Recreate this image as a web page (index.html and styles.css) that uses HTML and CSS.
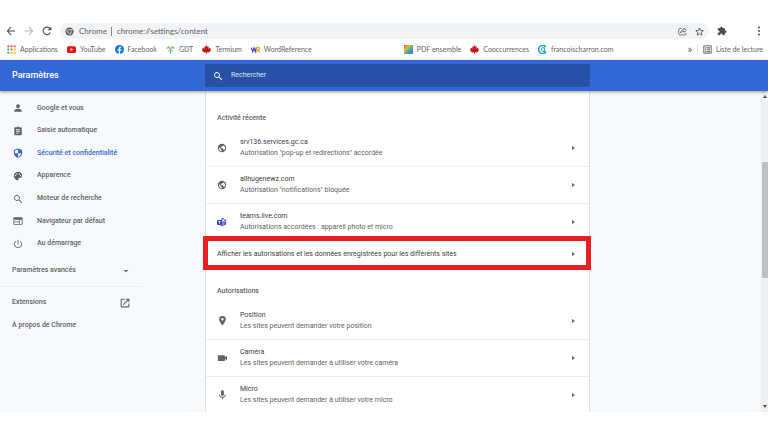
FILE: index.html
```html
<!DOCTYPE html>
<html lang="fr">
<head>
  <meta charset="utf-8">
  <title>Paramètres</title>
  <link rel="stylesheet" href="styles.css">
</head>
<body>

<!-- Browser toolbar -->
<div class="toolbar">
  <button class="tool-btn" aria-label="Retour"><svg class="icon" viewBox="0 0 24 24"><path d="M22 10.800H6l7-7L11.300 2 1.500 12l9.800 10 1.700-1.800-7-7h16z"/></svg></button>
  <button class="tool-btn disabled" aria-label="Avancer"><svg class="icon" viewBox="0 0 24 24"><path d="M2 10.800h16l-7-7L12.700 2l9.800 10-9.800 10-1.700-1.800 7-7H2z"/></svg></button>
  <button class="tool-btn" aria-label="Actualiser"><svg class="icon" viewBox="0 0 24 24"><path d="M20 15.500A9 9 0 1 1 18.500 5.700L21 8.200" fill="none" stroke="currentColor" stroke-width="2.600"/><path d="M22.500 1v9h-9z"/></svg></button>
  <div class="omnibox">
    <svg class="icon" viewBox="0 0 24 24"><circle cx="12" cy="12" r="11"/><path d="M12 7h10M7.700 14.500l-5-8.500M16.300 14.500l-5 8.500" stroke="#f1f3f4" stroke-width="1.600"/><circle cx="12" cy="12" r="5" stroke="#f1f3f4" stroke-width="1.600"/></svg>
    <label class="omnibox-label" for="url">Chrome</label>
    <input class="omnibox-input" id="url" type="text" value="chrome://settings/content">
    <button class="tool-btn" aria-label="Partager"><svg class="icon" viewBox="0 0 24 24"><path d="M10 4H5a3 3 0 0 0-3 3v11a3 3 0 0 0 3 3h13a3 3 0 0 0 3-3v-2M7 16c0-6 4-9 9-9V2.500L22.500 9 16 14.500V11c-4 0-7 1.500-9 5z" fill="none" stroke="currentColor" stroke-width="1.900"/></svg></button>
    <button class="tool-btn" aria-label="Ajouter aux favoris"><svg class="icon" viewBox="0 0 24 24"><path d="M12 2.500l2.900 6.600 7.100.7-5.400 4.700 1.600 7L12 17.800l-6.200 3.700 1.600-7L2 9.800l7.100-.7z" fill="none" stroke="currentColor" stroke-width="2.200"/></svg></button>
  </div>
  <button class="tool-btn" aria-label="Extensions"><svg class="icon" viewBox="0 0 24 24"><path d="M20.500 11H19V7c0-1.100-.9-2-2-2h-4V3.500a2.500 2.500 0 0 0-5 0V5H4c-1.100 0-2 .9-2 2v3.800h1.500a2.700 2.700 0 0 1 0 5.400H2V20c0 1.100.9 2 2 2h3.800v-1.500a2.700 2.700 0 0 1 5.400 0V22H17c1.100 0 2-.9 2-2v-4h1.500a2.500 2.500 0 0 0 0-5z"/></svg></button>
  <button class="tool-btn menu-btn" aria-label="Menu"><svg class="icon" viewBox="0 0 24 24"><circle cx="12" cy="3.500" r="2.400"/><circle cx="12" cy="12" r="2.400"/><circle cx="12" cy="20.500" r="2.400"/></svg></button>
</div>

<!-- Bookmarks -->
<nav class="bookmarks">
  <a class="bookmark" href="#"><svg class="icon" viewBox="0 0 24 24"><path fill="#ea4335" d="M1 1h5v5H1zM9.500 1h5v5h-5zM18 1h5v5h-5z"/><path fill="#34a853" d="M1 9.500h5v5H1z"/><path fill="#4285f4" d="M9.500 9.500h5v5h-5z"/><path fill="#fbbc05" d="M18 9.500h5v5h-5zM9.500 18h5v5h-5zM18 18h5v5h-5z"/><path fill="#34a853" d="M1 18h5v5H1z"/></svg>Applications</a>
  <a class="bookmark" href="#"><svg class="icon" viewBox="0 0 24 24"><rect y="3" width="24" height="18" rx="4" fill="#e11"/><path d="M9.500 8v8l7-4z" fill="#fff"/></svg>YouTube</a>
  <a class="bookmark" href="#"><svg class="icon" viewBox="0 0 24 24"><circle cx="12" cy="12" r="12" fill="#1877e8"/><path d="M10 24v-9H7v-3.500h3V9c0-3 1.800-4.600 4.500-4.600l2.500.2v3h-1.500c-1.500 0-1.900.9-1.900 1.900v2H17l-.6 3.500h-2.800v9z" fill="#fff"/></svg>Facebook</a>
  <a class="bookmark" href="#"><svg class="icon gdt" viewBox="0 0 24 24"><path d="M12 23V9" stroke="#6aa84f"/><path d="M12 11C9 6 5 6 1 9M12 11c3-5 7-5 11-2" stroke="#5cb58a"/><path d="M12 11L6 2M12 11l6-9" stroke="#b6c94b"/><path d="M12 12l-7 5M12 12l7 5" stroke="#8ccbb4"/></svg>GDT</a>
  <a class="bookmark" href="#"><svg class="icon" viewBox="0 0 24 24"><path fill="#c4161c" d="M12 0l2.600 4.500L18 3l-1 7 3.500-3 .8 2.200H24l-1.500 4L24 15l-6 5-5-.8V24h-2v-4.800L6 20l-6-5 1.500-1.800-1.500-4h2.700L3.500 7 7 10 6 3l3.400 1.500z"/></svg>Termium</a>
  <a class="bookmark" href="#"><svg class="icon wr" viewBox="0 0 24 24"><path d="M1 7l3.500 11L8 8l3.500 10L14 7" stroke="#4540c8"/><path d="M15.500 20V6h4a3.500 3.500 0 0 1 0 7h-4M19 13l4 7" stroke="#e49b3b"/></svg>WordReference</a>
  <span class="bookmark-gap"></span>
  <a class="bookmark" href="#"><span class="rainbow"></span>PDF ensemble</a>
  <a class="bookmark" href="#"><svg class="icon" viewBox="0 0 24 24"><path fill="#c4161c" d="M12 0l2.600 4.500L18 3l-1 7 3.500-3 .8 2.200H24l-1.500 4L24 15l-6 5-5-.8V24h-2v-4.800L6 20l-6-5 1.500-1.800-1.500-4h2.700L3.500 7 7 10 6 3l3.400 1.500z"/></svg>Cooccurrences</a>
  <a class="bookmark" href="#"><svg class="icon charron" viewBox="0 0 24 24"><path d="M21 5a11 11 0 1 0 0 14" stroke="#1aa3cf" stroke-width="4"/><path d="M17 9a5 5 0 1 0 0 6M17 6v12h5" stroke="#1a8fc0" stroke-width="2.500"/></svg>francoischarron.com</a>
  <div class="reading">
    <button class="more-btn" aria-label="Autres favoris">»</button>
    <a class="bookmark reading-link" href="#"><svg class="icon" viewBox="0 0 24 24"><path d="M2 2h20v20H2z" fill="none" stroke="currentColor" stroke-width="2.400"/><path d="M5 6h4v3H5zM11 6h8v3h-8zM5 11h4v3H5zM11 11h8v3h-8zM5 16h4v3H5zM11 16h8v3h-8z"/></svg>Liste de lecture</a>
  </div>
</nav>

<!-- Settings header -->
<header class="header">
  <h1 class="header-title">Paramètres</h1>
  <div class="search">
    <label class="search-label" for="search" aria-label="Rechercher"><svg class="icon" viewBox="0 0 24 24"><path d="M16 14.500h-.8l-.3-.3a7 7 0 1 0-.7.700l.3.300v.8l6 6 1.700-1.700zm-6.500 0a5 5 0 1 1 0-10 5 5 0 0 1 0 10z"/></svg></label>
    <input class="search-input" id="search" type="text" placeholder="Rechercher">
  </div>
</header>

<div class="content">
  <nav class="sidebar">
    <div class="menu">
      <a class="menu-item" href="#"><svg class="icon" viewBox="0 0 24 24"><path d="M12 12a4.500 4.500 0 1 0 0-9 4.500 4.500 0 0 0 0 9zm0 2c-3 0-9 1.500-9 4.500V21h18v-2.500c0-3-6-4.500-9-4.500z"/></svg>Google et vous</a>
      <a class="menu-item" href="#"><svg class="icon" viewBox="0 0 24 24"><path d="M19 3h-4.200a3 3 0 0 0-5.600 0H5a2 2 0 0 0-2 2v15c0 1.100.9 2 2 2h14a2 2 0 0 0 2-2V5a2 2 0 0 0-2-2zm-5 15H7v-2h7zm3-4H7v-2h10zm0-4H7V8h10z"/></svg>Saisie automatique</a>
      <a class="menu-item active" href="#"><svg class="icon" viewBox="0 0 24 24"><path d="M12 1L2 5v6.500C2 17 6 22 12 23.500 18 22 22 17 22 11.500V5zm0 11.500h7.500c-.5 4-3.500 7.300-7.500 8.500v-8.500H4.500v-6L12 3.500z"/></svg>Sécurité et confidentialité</a>
      <a class="menu-item" href="#"><svg class="icon" viewBox="0 0 24 24"><path d="M12 2a10 10 0 0 0 0 20 1.700 1.700 0 0 0 1.200-2.800c-.9-1.200-.2-2.700 1.300-2.700H16.500A5.500 5.500 0 0 0 22 11c0-5-4.500-9-10-9zM6 12.500a1.600 1.600 0 1 1 0-3.200 1.600 1.600 0 0 1 0 3.200zm3-4a1.600 1.600 0 1 1 0-3.200 1.600 1.600 0 0 1 0 3.200zm6 0a1.600 1.600 0 1 1 0-3.200 1.600 1.600 0 0 1 0 3.200zm3 4a1.600 1.600 0 1 1 0-3.200 1.600 1.600 0 0 1 0 3.200z"/></svg>Apparence</a>
      <a class="menu-item" href="#"><svg class="icon" viewBox="0 0 24 24"><path d="M16 14.500h-.8l-.3-.3a7 7 0 1 0-.7.700l.3.300v.8l6 6 1.700-1.700zm-6.500 0a5 5 0 1 1 0-10 5 5 0 0 1 0 10z"/></svg>Moteur de recherche</a>
      <a class="menu-item" href="#"><svg class="icon" viewBox="0 0 24 24"><path d="M21 3H3a2 2 0 0 0-2 2v14c0 1.100.9 2 2 2h18a2 2 0 0 0 2-2V5a2 2 0 0 0-2-2zM14 19H3v-4h11zm0-6H3V9h11zm7 6h-5V9h5z"/></svg>Navigateur par défaut</a>
      <a class="menu-item" href="#"><svg class="icon" viewBox="0 0 24 24"><path d="M11 2h2v11h-2zM17.800 4.800l-1.400 1.400A7.500 7.500 0 1 1 7.600 6.200L6.200 4.800a9.500 9.500 0 1 0 11.600 0z"/></svg>Au démarrage</a>
    </div>
    <button class="side-row advanced">Paramètres avancés<svg class="icon" viewBox="0 0 24 24"><path d="M5 9l7 7 7-7z"/></svg></button>
    <div class="side-links">
      <a class="side-row" href="#">Extensions<svg class="icon" viewBox="0 0 24 24"><path d="M20 20H4V4h7V1.500H3.500a2 2 0 0 0-2 2v17c0 1.100.9 2 2 2h17a2 2 0 0 0 2-2V13H20zM14 1.500V4h4.200L7 15.200 8.800 17 20 5.800V10h2.500V1.500z"/></svg></a>
      <a class="side-row" href="#">À propos de Chrome</a>
    </div>
  </nav>

  <main class="card">
    <h2 class="section-title">Activité récente</h2>
    <a class="row" href="#">
      <svg class="icon" viewBox="0 0 24 24"><path d="M12 2a10 10 0 1 0 0 20 10 10 0 0 0 0-20zM4.500 12c0-.6.100-1.200.2-1.800l4.300 4.300v1.500l3 2v1.500A7.500 7.500 0 0 1 4.500 12zm13 5c-.4-1-1.200-1.500-2-1.500h-1v-3H9V10h2V8h3l1.500-2.500a7.500 7.500 0 0 1 2 11.500z"/></svg>
      <span class="row-text"><span class="row-title">srv136.services.gc.ca</span><span class="row-sub">Autorisation "pop-up et redirections" accordée</span></span>
      <span class="arrow"></span>
    </a>
    <a class="row" href="#">
      <svg class="icon" viewBox="0 0 24 24"><path d="M12 2a10 10 0 1 0 0 20 10 10 0 0 0 0-20zM4.500 12c0-.6.100-1.200.2-1.800l4.300 4.300v1.500l3 2v1.500A7.500 7.500 0 0 1 4.500 12zm13 5c-.4-1-1.200-1.500-2-1.500h-1v-3H9V10h2V8h3l1.500-2.500a7.500 7.500 0 0 1 2 11.500z"/></svg>
      <span class="row-text"><span class="row-title">allhugenewz.com</span><span class="row-sub">Autorisation "notifications" bloquée</span></span>
      <span class="arrow"></span>
    </a>
    <a class="row" href="#">
      <svg class="icon" viewBox="0 0 24 24"><circle cx="19.500" cy="7.500" r="2.300" fill="#5059c9"/><path d="M16 11h6v5a4 4 0 0 1-5 3.500z" fill="#5059c9"/><circle cx="13" cy="5" r="3.500" fill="#7b83eb"/><path d="M7 10h11v7a5.500 5.500 0 0 1-11 0z" fill="#7b83eb"/><rect y="7" width="12" height="12" rx="1.500" fill="#4048b0"/><path d="M3 10.500h6M6 10.500V16" stroke="#fff" stroke-width="1.800"/></svg>
      <span class="row-text"><span class="row-title">teams.live.com</span><span class="row-sub">Autorisations accordées : appareil photo et micro</span></span>
      <span class="arrow"></span>
    </a>
    <a class="row all-sites" href="#">
      <span class="row-text">Afficher les autorisations et les données enregistrées pour les différents sites</span>
      <span class="arrow"></span>
    </a>
    <h2 class="section-title">Autorisations</h2>
    <a class="row" href="#">
      <svg class="icon" viewBox="0 0 24 24"><path d="M13 0a8 8 0 0 0-8 8c0 6 8 15 8 15s8-9 8-15a8 8 0 0 0-8-8zm0 11a3 3 0 1 1 0-6 3 3 0 0 1 0 6z"/></svg>
      <span class="row-text"><span class="row-title">Position</span><span class="row-sub">Les sites peuvent demander votre position</span></span>
      <span class="arrow"></span>
    </a>
    <a class="row" href="#">
      <svg class="icon" viewBox="0 0 24 24"><path d="M19 10.500V7a1.500 1.500 0 0 0-1.500-1.500h-14A1.500 1.500 0 0 0 2 7v10.500A1.500 1.500 0 0 0 3.500 19h14a1.500 1.500 0 0 0 1.500-1.500V14l5 4.500V6z"/></svg>
      <span class="row-text"><span class="row-title">Caméra</span><span class="row-sub">Les sites peuvent demander à utiliser votre caméra</span></span>
      <span class="arrow"></span>
    </a>
    <a class="row" href="#">
      <svg class="icon" viewBox="0 0 24 24"><path d="M13 14.500a3.500 3.500 0 0 0 3.500-3.500V4a3.500 3.500 0 0 0-7 0v7a3.500 3.500 0 0 0 3.500 3.500zM19 11c0 3.500-3 6-6 6s-6-2.500-6-6H5c0 4 3 7.200 7 7.900V23h2v-4.100c4-.7 7-3.900 7-7.900z"/></svg>
      <span class="row-text"><span class="row-title">Micro</span><span class="row-sub">Les sites peuvent demander à utiliser votre micro</span></span>
      <span class="arrow"></span>
    </a>
  </main>

  <div class="scrollbar">
    <span class="scroll-up"></span>
    <span class="scroll-thumb"></span>
    <span class="scroll-down"></span>
  </div>
</div>

</body>
</html>
```

FILE: styles.css
```css
* {
  box-sizing: border-box;
}

body {
  display: flex;
  flex-direction: column;
  height: 100vh;
  margin: 0;
  padding: 23px 0 20px;
  overflow: hidden;
  background-color: #fff;
  color: #5f6368;
  font-family: Roboto, Arial, sans-serif;
  font-size: 7px;
  line-height: 11px;
}

a {
  color: inherit;
  text-decoration: none;
}

button {
  padding: 0;
  border: 0;
  background: none;
  color: inherit;
  font: inherit;
}

input {
  min-width: 0;
  padding: 0;
  border: 0;
  outline: 0;
  background: none;
  font: inherit;
}

.icon {
  display: block;
  flex: none;
  width: 10px;
  height: 10px;
  fill: currentColor;
}

/* Toolbar */
.toolbar {
  display: flex;
  flex: none;
  align-items: center;
  gap: 8px;
  height: 16px;
  padding: 0 4px 0 6px;
  font-family: Lato, sans-serif;
  font-size: 8px;
}

.tool-btn {
  color: #4a4d51;
}

.tool-btn.disabled {
  color: #b4b6b9;
}

.menu-btn {
  margin-left: 19px;
}

.omnibox {
  display: flex;
  flex: 1;
  align-items: center;
  gap: 8px;
  height: 16px;
  padding: 0 5px;
  border-radius: 8px;
  background-color: #f1f3f4;
}

.omnibox .icon {
  width: 9px;
  height: 9px;
}

.omnibox-label {
  margin-left: -3px;
  padding-right: 4px;
  border-right: 1px solid #85888c;
  line-height: 9px;
}

.omnibox-input {
  flex: 1;
  margin-left: -3px;
  color: #5f6368;
}

/* Bookmarks */
.bookmarks {
  display: flex;
  flex: none;
  align-items: center;
  gap: 9px;
  height: 21px;
  padding: 0 5px 1px 7px;
  font-family: Lato, sans-serif;
  white-space: nowrap;
}

.bookmark {
  display: flex;
  align-items: center;
  gap: 4px;
}

.bookmark .icon {
  width: 9px;
  height: 9px;
}

.bookmark-gap {
  width: 74px;
}

.bookmark .gdt,
.bookmark .wr,
.bookmark .charron {
  fill: none;
  stroke-width: 3px;
}

.rainbow {
  width: 9px;
  height: 9px;
  background: linear-gradient(135deg, #e8503a, #f0b32e 30%, #5cc46a 50%, #3f8fe0 70%, #a04fd8);
}

.reading {
  display: flex;
  align-items: center;
  gap: 5px;
  margin-left: auto;
}

.more-btn {
  font-family: Roboto, sans-serif;
  font-size: 10px;
}

.reading-link {
  padding-left: 5px;
  border-left: 1px solid #e4e6e8;
}

/* Settings header */
.header {
  display: grid;
  flex: none;
  grid-template-columns: 205fr 385fr 178fr;
  align-items: center;
  height: 31px;
  background-color: #3367d6;
  color: #fff;
  box-shadow: 0 1px 3px rgba(0, 0, 0, 0.4);
  z-index: 1;
}

.header-title {
  margin: 0;
  padding-left: 12px;
  font-size: 9px;
  font-weight: 500;
}

.search {
  display: flex;
  align-items: center;
  gap: 8px;
  height: 23px;
  padding: 0 8px;
  border-radius: 2px;
  background-color: #2850a7;
}

.search-input {
  flex: 1;
  color: #fff;
}

.search-input::placeholder {
  color: #dbe4f7;
  opacity: 1;
}

/* Page content */
.content {
  display: grid;
  flex: 1;
  grid-template-columns: 205fr 385fr 171fr 7px;
  grid-template-rows: 100%;
  min-height: 0;
  overflow: hidden;
  background-color: #f8f9fa;
}

.sidebar {
  padding-top: 6px;
  font-weight: 500;
}

.menu {
  display: grid;
  grid-auto-rows: 1fr;
  height: 158px;
}

.menu-item {
  display: flex;
  align-items: center;
  gap: 14px;
  padding-left: 13px;
}

.menu-item.active {
  color: #3367d6;
}

.side-row {
  display: flex;
  align-items: center;
  justify-content: space-between;
  width: 142px;
  height: 23px;
  padding: 0 12px;
}

.advanced {
  margin: 4px 0;
}

.advanced .icon {
  width: 8px;
  height: 8px;
}

.side-links {
  width: 142px;
  padding-top: 4px;
  border-top: 1px solid #eceef0;
}

/* Card */
.card {
  padding-top: 3px;
  border: solid #dcdfe3;
  border-width: 0 1px;
  background-color: #fff;
}

.section-title {
  height: 36px;
  margin: 0;
  padding: 19px 11px 0;
  font-size: 7px;
  font-weight: 500;
}

.row {
  display: flex;
  align-items: center;
  gap: 13px;
  height: 37px;
  padding: 0 14px 0 11px;
  border-bottom: 1px solid #eff0f2;
}

.row-text {
  flex: 1;
}

.row-title,
.row-sub {
  display: block;
}

.row-title {
  color: #3c4043;
}

.arrow {
  border: solid transparent;
  border-width: 2px 0 2px 3px;
  border-left-color: #5f6368;
}

.all-sites {
  position: relative;
  height: 26px;
  border-bottom: 0;
  color: #3c4043;
}

/* Red frame round the link */
.all-sites::after {
  content: "";
  position: absolute;
  inset: -5px -2px -3px -3px;
  border: 5px solid #e81e25;
}

/* Scrollbar */
.scrollbar {
  display: flex;
  grid-column: 4;
  flex-direction: column;
  align-items: center;
  padding: 4px 0;
  background-color: #f0f0f0;
}

.scroll-up,
.scroll-down {
  border: 2px solid transparent;
}

.scroll-up {
  border-top: 0;
  border-bottom: 3px solid #505050;
}

.scroll-down {
  margin-top: auto;
  border-bottom: 0;
  border-top: 3px solid #505050;
}

.scroll-thumb {
  width: 6px;
  height: 37%;
  margin-top: 64px;
  background-color: #c1c1c1;
}
```
